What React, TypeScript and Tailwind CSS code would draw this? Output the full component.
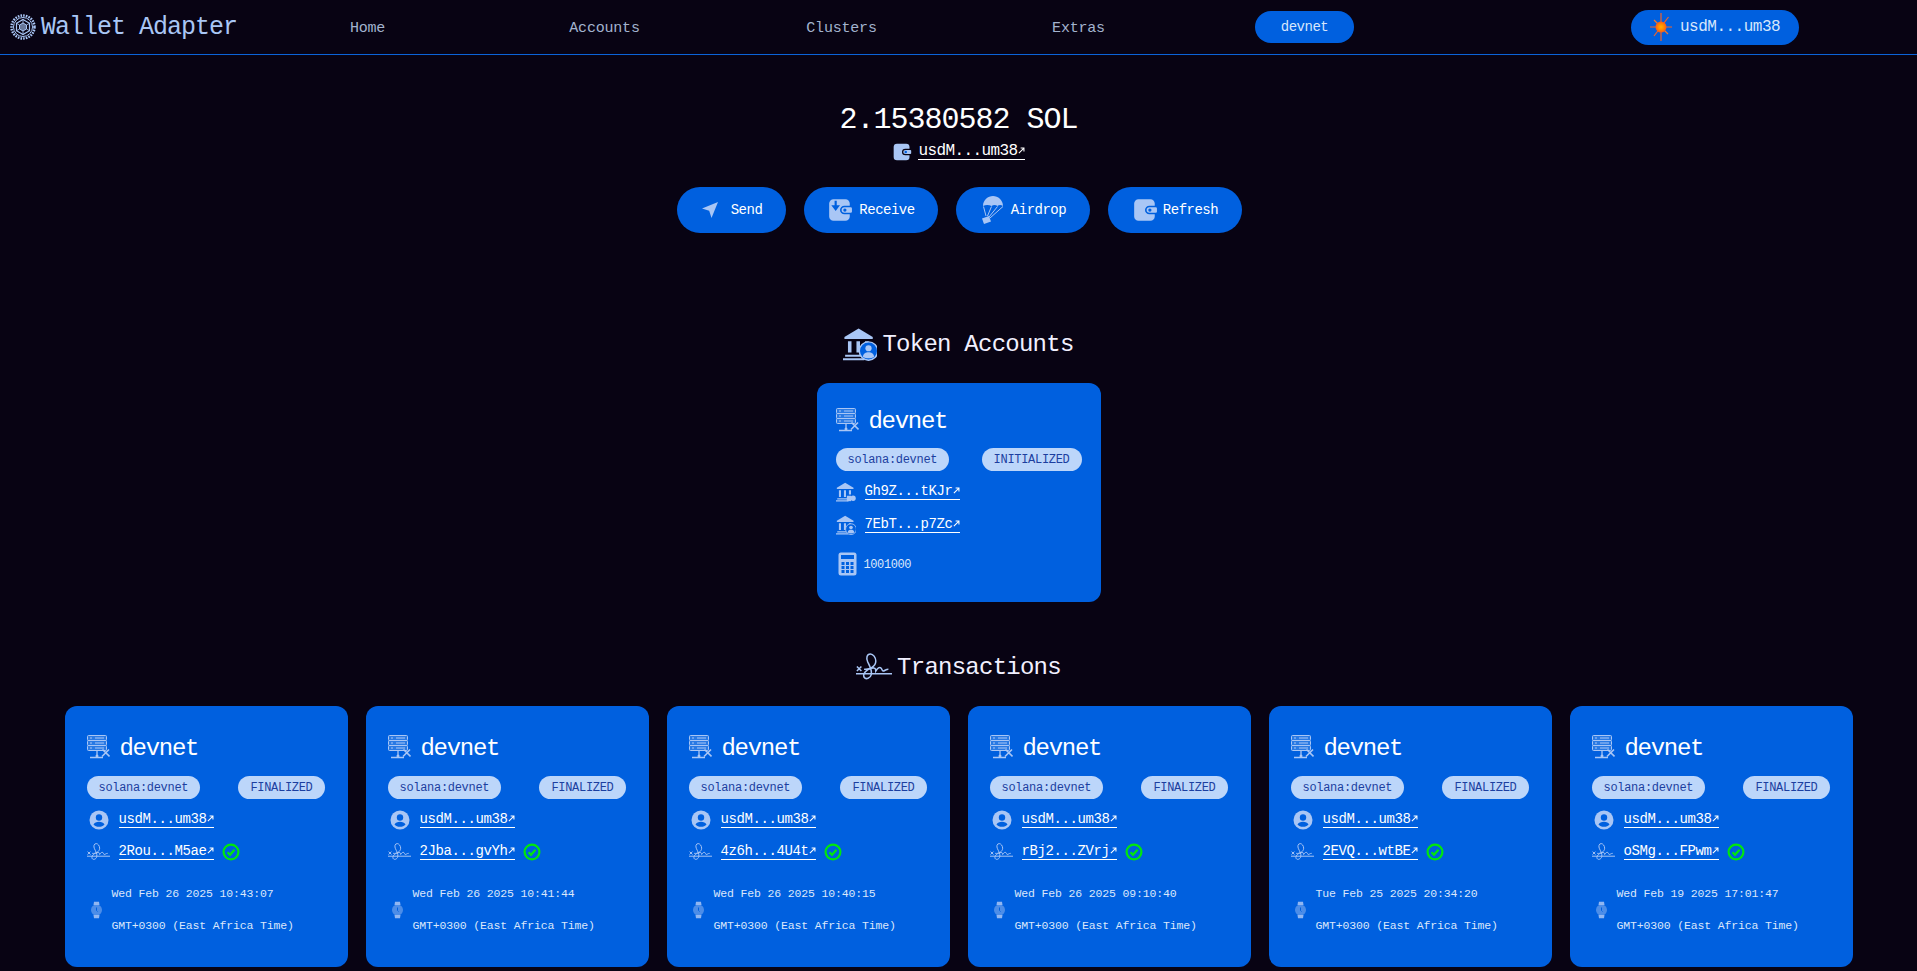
import { ReactNode } from "react";

const ICON = "#a9c6f5";

const LogoIcon = () => (
  <svg width="28" height="28" viewBox="0 0 28 28" fill="none" stroke={ICON}>
    <circle cx="14" cy="14" r="11.5" strokeWidth="2.5" strokeDasharray="1.6 1.1" />
    <circle cx="14" cy="14" r="9.5" strokeWidth="1" />
    <path d="M14 6.5l6.5 3.75v7.5L14 21.5l-6.5-3.75v-7.5z" strokeWidth="1.2" />
    <path d="M14 10l3.5 2v4L14 18l-3.5-2v-4z" fill={ICON} fillOpacity="0.6" strokeWidth="1" />
    <path d="M14 6.5V10M20.5 10.25L17.5 12M20.5 17.75L17.5 16M14 21.5V18M7.5 17.75L10.5 16M7.5 10.25L10.5 12" strokeWidth="0.8" />
  </svg>
);

const StarIcon = () => (
  <svg width="24" height="28" viewBox="0 0 24 28">
    <defs>
      <radialGradient id="burst">
        <stop offset="0" stopColor="#ffb100" />
        <stop offset="0.6" stopColor="#ff8400" />
        <stop offset="1" stopColor="#f4581f" />
      </radialGradient>
    </defs>
    <path d="M12 0v28M1 14h22M19.500 4L5 23" stroke="#f0622a" strokeWidth="1.200" />
    <path d="M5 7l14 14" stroke="#f0762a" strokeWidth="1.200" />
    <circle cx="12" cy="14" r="5.500" fill="url(#burst)" />
  </svg>
);

const WalletIcon = ({ size, receive }: { size: number; receive?: boolean }) => (
  <svg width={size} height={size} viewBox="0 0 24 24" fill={ICON}>
    <path d="M6 2h11a4 4 0 014 4v2h-5a4 4 0 000 8h5v2a4 4 0 01-4 4H6a4 4 0 01-4-4V6a4 4 0 014-4z" />
    <path d="M16 9.500h6a1 1 0 011 1v3a1 1 0 01-1 1h-6a2.500 2.500 0 010-5z" />
    <circle cx="16.500" cy="12" r="1.500" fill="#0060df" />
    {receive && <path d="M7 3.500h2v4h3L8 13 4 7.500h3z" fill="#0060df" />}
  </svg>
);

const SendIcon = () => (
  <svg width="18" height="18" viewBox="0 0 18 18" fill={ICON}>
    <path d="M17 1L10.500 17 8.200 9.800 1 7.500z" />
  </svg>
);

const ParachuteIcon = () => (
  <svg width="24" height="30" viewBox="0 0 24 30" fill="none" stroke={ICON}>
    <path d="M3 11C3 5 8 1 13 1s10 4 10 10c-2-1.500-4-1.500-5.500 0-2-1.500-4-1.500-6 0-2.500-1.500-6-1.500-8.500 0z" fill={ICON} stroke="none" />
    <path d="M3.500 11.500L6 21M11.500 11.500L7.500 21M17.500 11.500L9 22M23 11.500L10 23" strokeWidth="1" />
    <path d="M2 23.500l7-2.500 2 5.500-7 2.500z" fill={ICON} stroke="none" />
  </svg>
);

const ServerIcon = () => (
  <svg width="23" height="24" viewBox="0 0 23 24" fill="none" stroke={ICON} strokeWidth="1">
    <rect x="0.500" y="0.500" width="19" height="5" rx="1" fill={ICON} fillOpacity="0.25" />
    <rect x="0.500" y="5.500" width="19" height="5" rx="1" fill={ICON} fillOpacity="0.25" />
    <rect x="0.500" y="10.500" width="19" height="5" rx="1" fill={ICON} fillOpacity="0.25" />
    <path d="M3 3h2M8 3h9M3 8h2M8 8h9M3 13h2M8 13h9" />
    <path d="M10 16v4M3 22.500h13" strokeWidth="1.300" />
    <circle cx="10" cy="21" r="1.500" fill={ICON} stroke="none" />
    <path d="M15.500 14.500l7 7M22 14.500l-7 7" strokeWidth="1.600" />
  </svg>
);

const BankIcon = ({ size = 20, badge }: { size?: number; badge?: "user" | "coin" }) => (
  <svg width={size} height={size} viewBox="0 0 24 24" fill={ICON}>
    <path d="M11 1l10 6v1.500H1V7z" />
    <path d="M3.500 10h2.500v8H3.500zM9.500 10H12v8H9.500zM15.500 10H18v5h-2.500z" />
    <path d="M1.500 19.500h13V21h-13zM0 22h15v1.500H0z" />
    {badge === "user" && (
      <>
        <circle cx="18" cy="17" r="6.500" fill="#0060df" stroke={ICON} strokeWidth="1" />
        <circle cx="18" cy="15" r="2.200" />
        <path d="M14 21c.5-2.500 2-3.200 4-3.200s3.500.700 4 3.200c-2.200 1.500-5.800 1.500-8 0z" />
      </>
    )}
    {badge === "coin" && (
      <>
        <path d="M13 16.500h5v6.500h-5z" />
        <circle cx="20.500" cy="19.500" r="3.200" />
      </>
    )}
  </svg>
);

const UserIcon = () => (
  <svg width="20" height="20" viewBox="0 0 20 20">
    <circle cx="10" cy="10" r="9.500" fill={ICON} />
    <circle cx="10" cy="7.500" r="3.200" fill="#0060df" />
    <path d="M4.500 14.500c1-2 3-2.800 5.500-2.800s4.500.800 5.500 2.800c-1.300 1.500-3.200 2.300-5.500 2.300s-4.200-.800-5.500-2.300z" fill="#0060df" />
  </svg>
);

const SignatureIcon = ({ width = 23 }: { width?: number }) => (
  <svg width={width} height={width * 0.8} viewBox="0 0 40 32" fill="none" stroke={ICON} strokeWidth="1.700">
    <path d="M0 23h40" />
    <path d="M1 15l5 5M6 15l-5 5" />
    <path d="M9 18c6 1 13-3 13-9 0-4-3-8-6-8-4 0-5 5-3 9 2 4 5 9 4 14-1 4-6 6-8 3-2-4 3-9 8-10 4-1 5 0 5 3 2-3 4-5 6-3 1 1 1 3 2 3 2 0 3-2 6-2" />
  </svg>
);

const CheckIcon = () => (
  <svg width="18" height="18" viewBox="0 0 18 18" fill="none" stroke="#00e70c" strokeWidth="2.200">
    <circle cx="9" cy="9" r="7.400" />
    <path d="M5.500 9.300l2.500 2.500 4.500-5" />
  </svg>
);

const CalculatorIcon = () => (
  <svg width="19" height="24" viewBox="0 0 19 24">
    <rect x="0.500" y="0.500" width="18" height="23" rx="2.500" fill={ICON} />
    <rect x="3" y="3" width="13" height="4" fill="#0060df" />
    {[3.500, 8, 12.500].map((x) =>
      [10, 14, 18].map((y) => <rect key={`${x}-${y}`} x={x} y={y} width="3" height="3" fill="#0060df" />)
    )}
  </svg>
);

const WatchIcon = () => (
  <svg width="11" height="18" viewBox="0 0 11 18">
    <path d="M2.500 4L3 .800h5L8.500 4zM2.500 14L3 17.200h5l.500-3.200z" fill={ICON} fillOpacity="0.85" />
    <circle cx="5.500" cy="9" r="5.500" fill={ICON} fillOpacity="0.45" />
    <path d="M5.500 6.500V9.500l1 1" stroke="#0060df" strokeWidth="1" fill="none" />
  </svg>
);

const ArrowOut = () => (
  <svg width="7" height="7" viewBox="0 0 8 8" fill="none" stroke="currentColor" strokeWidth="1.200" className="mb-[3px]">
    <path d="M1 7l5.500-5.500M3 1.200h3.800V5" />
  </svg>
);

const Address = ({ text, large }: { text: string; large?: boolean }) => (
  <a
    className={`inline-flex items-center border-b border-white leading-[15px] text-white ${
      large ? "text-base tracking-[-0.6px]" : "text-sm tracking-[-0.4px]"
    }`}
  >
    {text}
    <ArrowOut />
  </a>
);

const NavLink = ({ children }: { children: ReactNode }) => (
  <div className="mt-1 w-[237px] text-center text-[#a3b3cf] text-[15px] tracking-[-0.2px]">{children}</div>
);

const Pill = ({ icon, label, width, gap }: { icon: ReactNode; label: string; width: string; gap: string }) => (
  <button className={`flex h-[46px] items-center justify-center rounded-full bg-[#0060df] text-sm text-white tracking-[-0.5px] ${width} ${gap}`}>
    {icon}
    {label}
  </button>
);

const Badge = ({ children }: { children: ReactNode }) => (
  <span className="flex h-[23px] items-center rounded-full bg-[#bcd6fa] px-3 pt-[1px] text-xs text-[#1c3fa0] tracking-[-0.3px]">
    {children}
  </span>
);

const CardTitle = () => (
  <div className="flex h-[34px] items-center gap-[10px]">
    <ServerIcon />
    <span className="mt-[3px] text-2xl text-white tracking-[-1.300px]">devnet</span>
  </div>
);

const Heading = ({ icon, children }: { icon: ReactNode; children: ReactNode }) => (
  <h2 className="flex h-10 items-center gap-[5px] text-2xl text-[#f1f0ff] tracking-[-0.75px]">
    {icon}
    <span className="mt-[2px]">{children}</span>
  </h2>
);

type Tx = { sig: string; date: string };

const txs: Tx[] = [
  { sig: "2Rou...M5ae", date: "Wed Feb 26 2025 10:43:07" },
  { sig: "2Jba...gvYh", date: "Wed Feb 26 2025 10:41:44" },
  { sig: "4z6h...4U4t", date: "Wed Feb 26 2025 10:40:15" },
  { sig: "rBj2...ZVrj", date: "Wed Feb 26 2025 09:10:40" },
  { sig: "2EVQ...wtBE", date: "Tue Feb 25 2025 20:34:20" },
  { sig: "oSMg...FPwm", date: "Wed Feb 19 2025 17:01:47" },
];

const TxCard = ({ tx }: { tx: Tx }) => (
  <div className="h-[261px] w-[283px] rounded-xl bg-[#0060df] px-[22px] pt-6">
    <CardTitle />
    <div className="mt-3 flex justify-between pr-[1px]">
      <Badge>solana:devnet</Badge>
      <Badge>FINALIZED</Badge>
    </div>
    <div className="mt-[9px] flex h-6 items-center">
      <div className="flex w-8 pl-[2px]">
        <UserIcon />
      </div>
      <Address text="usdM...um38" />
    </div>
    <div className="mt-2 flex h-6 items-center">
      <div className="flex w-8">
        <SignatureIcon />
      </div>
      <Address text={tx.sig} />
      <span className="ml-2 flex">
        <CheckIcon />
      </span>
    </div>
    <div className="mt-[14px] flex items-center">
      <div className="flex w-[25px] pl-[4px]">
        <WatchIcon />
      </div>
      <div className="text-[11.500px] leading-8 text-[#dbe7fb] tracking-[-0.15px]">
        <p>{tx.date}</p>
        <p>GMT+0300 (East Africa Time)</p>
      </div>
    </div>
  </div>
);

export default function App() {
  return (
    <div className="min-h-[971px] overflow-hidden bg-[#080313] font-['Liberation_Mono',monospace]">
      <header className="flex h-[55px] items-center border-b border-[#0b63d8]">
        <div className="flex w-[249px] items-center gap-1 pl-[9px]">
          <LogoIcon />
          <span className="mt-[2px] text-[25px] text-[#a9c6f5] tracking-[-1px]">Wallet Adapter</span>
        </div>
        <NavLink>Home</NavLink>
        <NavLink>Accounts</NavLink>
        <NavLink>Clusters</NavLink>
        <NavLink>Extras</NavLink>
        <button className="ml-[58px] h-8 w-[99px] rounded-full bg-[#0060df] text-sm text-[#d6e6fc] tracking-[-0.5px]">
          devnet
        </button>
        <button className="ml-[277px] flex h-[35px] w-[168px] items-center gap-[7px] rounded-full bg-[#0060df] pl-[18px] text-base text-[#d6e6fc] tracking-[-0.5px]">
          <StarIcon />
          usdM...um38
        </button>
      </header>

      <main className="flex flex-col items-center">
        <h1 className="mt-[47px] h-9 text-3xl leading-9 text-white tracking-[-1px]">2.15380582 SOL</h1>
        <div className="mt-[2px] flex h-6 items-center gap-[6px]">
          <WalletIcon size={20} />
          <Address text="usdM...um38" large />
        </div>

        <div className="ml-[2px] mt-[23px] flex gap-[18px]">
          <Pill icon={<SendIcon />} label="Send" width="w-[109px]" gap="gap-3" />
          <Pill icon={<WalletIcon size={26} receive />} label="Receive" width="w-[134px]" gap="gap-[6px]" />
          <Pill icon={<ParachuteIcon />} label="Airdrop" width="w-[134px]" gap="gap-[7px]" />
          <Pill icon={<WalletIcon size={26} />} label="Refresh" width="w-[134px]" gap="gap-[5px]" />
        </div>

        <div className="mt-[91px]">
          <Heading icon={<BankIcon size={34} badge="user" />}>Token Accounts</Heading>
        </div>

        <div className="mt-[19px] h-[219px] w-[284px] rounded-xl bg-[#0060df] px-[19px] pt-5">
          <CardTitle />
          <div className="mt-[11px] flex justify-between">
            <Badge>solana:devnet</Badge>
            <Badge>INITIALIZED</Badge>
          </div>
          <div className="mt-[9px] flex h-6 items-center">
            <div className="flex w-[29px]">
              <BankIcon badge="coin" />
            </div>
            <Address text="Gh9Z...tKJr" />
          </div>
          <div className="mt-[9px] flex h-6 items-center">
            <div className="flex w-[29px]">
              <BankIcon badge="user" />
            </div>
            <Address text="7EbT...p7Zc" />
          </div>
          <div className="mt-[15px] flex h-6 items-center gap-[7px] pl-[2px]">
            <CalculatorIcon />
            <span className="mt-[2px] text-xs text-[#dbe7fb] tracking-[-0.4px]">1001000</span>
          </div>
        </div>

        <div className="mt-[45px]">
          <Heading icon={<SignatureIcon width={36} />}>Transactions</Heading>
        </div>

        <div className="mt-[19px] flex justify-center gap-[18px]">
          {txs.map((tx) => (
            <TxCard key={tx.sig} tx={tx} />
          ))}
        </div>
      </main>
    </div>
  );
}
